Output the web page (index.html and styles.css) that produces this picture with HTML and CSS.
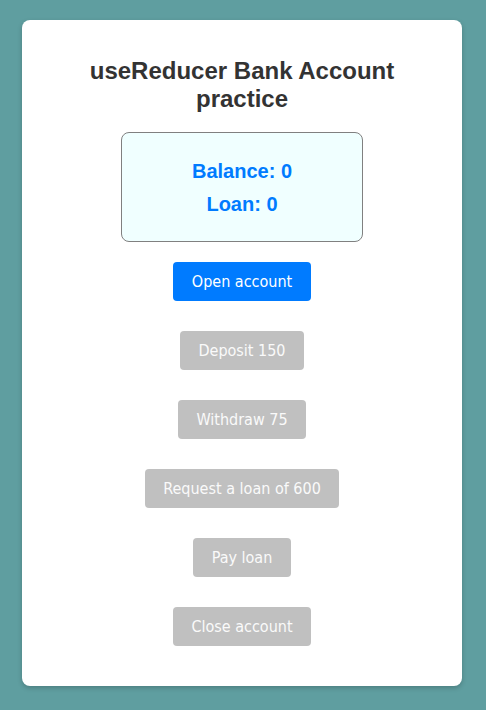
FILE: index.html
```html
<!DOCTYPE html>
<html lang="en">
<head>
<meta charset="utf-8">
<title>useReducer Bank Account practice</title>
<link rel="stylesheet" href="styles.css">
</head>
<body>
<main class="card">
  <h1 class="title">useReducer Bank Account practice</h1>
  <section class="summary">
    <p class="summary-line">Balance: 0</p>
    <p class="summary-line">Loan: 0</p>
  </section>
  <div class="actions">
    <button class="btn btn-primary">Open account</button>
    <button class="btn" disabled>Deposit 150</button>
    <button class="btn" disabled>Withdraw 75</button>
    <button class="btn" disabled>Request a loan of 600</button>
    <button class="btn" disabled>Pay loan</button>
    <button class="btn" disabled>Close account</button>
  </div>
</main>
</body>
</html>
```
FILE: styles.css
```css
html, body {
  margin: 0;
  height: 100%;
}
body {
  background: #5f9ea0;
  padding: 20px 24px 0 22px;
  box-sizing: border-box;
  font-family: "Liberation Sans", Arial, sans-serif;
}
.card {
  background: #fff;
  border-radius: 8px;
  box-shadow: 0 2px 5px rgba(0, 0, 0, 0.2);
  padding: 20px 20px 40px;
  display: flex;
  flex-direction: column;
  align-items: center;
}
.title {
  margin: 17px 0 19px;
  font-size: 24px;
  line-height: 28px;
  font-weight: bold;
  color: #333;
  text-align: center;
}
.summary {
  width: 242px;
  box-sizing: border-box;
  background: #f0ffff;
  border: 1px solid #808080;
  border-radius: 8px;
  padding: 27px 0 25px;
  display: flex;
  flex-direction: column;
  align-items: center;
  gap: 10px;
}
.summary-line {
  margin: 0;
  font-size: 20px;
  line-height: 23px;
  font-weight: bold;
  color: #007bff;
}
.actions {
  margin-top: 20px;
  display: flex;
  flex-direction: column;
  align-items: center;
  gap: 30px;
}
.btn {
  font-family: "DejaVu Sans Condensed", "DejaVu Sans", sans-serif;
  font-size: 16px;
  line-height: 19px;
  padding: 10px 18.5px;
  border: none;
  border-radius: 4px;
  background: #c0c0c0;
  color: #fafafa;
}
.btn-primary {
  background: #007bff;
  color: #fff;
}
```
